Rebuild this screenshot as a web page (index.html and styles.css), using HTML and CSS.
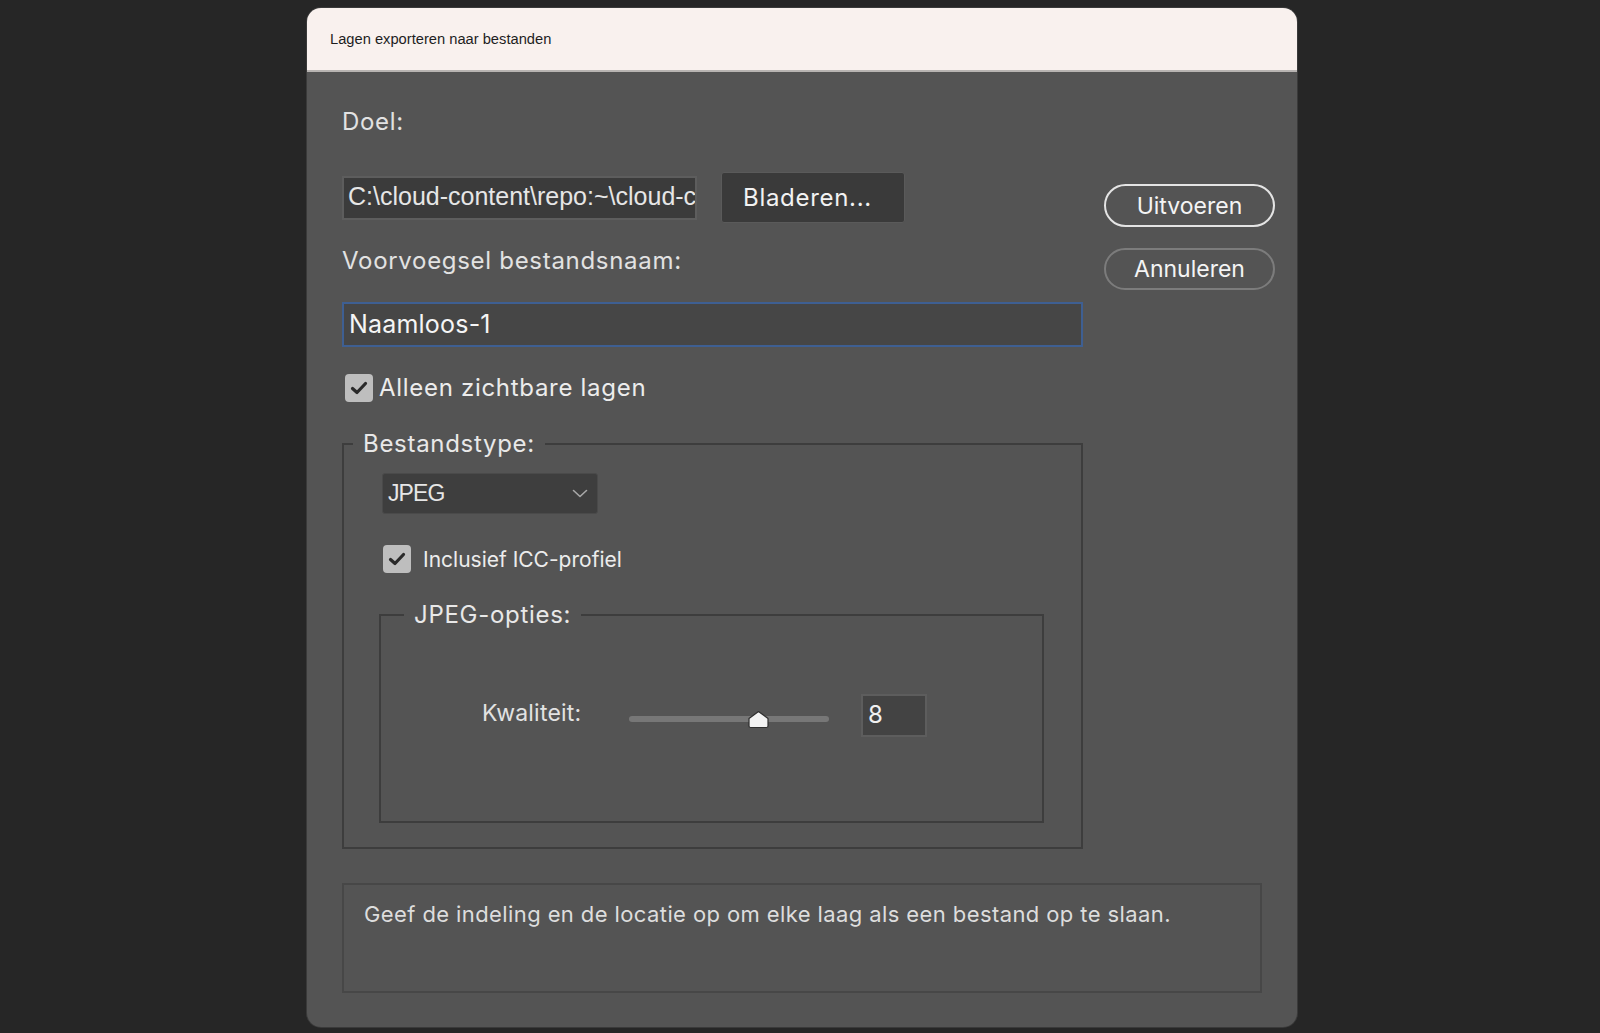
FILE: index.html
```html
<!DOCTYPE html>
<html lang="nl">
<head>
<meta charset="utf-8">
<title>Lagen exporteren naar bestanden</title>
<link rel="stylesheet" href="styles.css">
</head>
<body>
  <div class="dialog">
    <div class="titlebar"><span class="title">Lagen exporteren naar bestanden</span></div>
    <div class="content">
      <div class="top">
        <div class="main">
          <div class="label doel">Doel:</div>
          <div class="path-row">
            <div class="path-input">C:\cloud-content\repo:~\cloud-c</div>
            <button class="browse">Bladeren...</button>
          </div>
          <div class="label prefix">Voorvoegsel bestandsnaam:</div>
          <div class="name-input">Naamloos-1</div>
          <div class="check-row visible">
            <span class="checkbox"><svg width="20" height="20" viewBox="0 0 20 20"><path d="M3.5 10.5 L8 14.5 L16.5 5.5" fill="none" stroke="#2a2a2a" stroke-width="3.2" stroke-linecap="round" stroke-linejoin="round"/></svg></span>
            <span class="check-label big">Alleen zichtbare lagen</span>
          </div>
          <fieldset class="group filetype">
            <legend>Bestandstype:</legend>
            <div class="group-body">
              <div class="select">
                <span>JPEG</span>
                <svg width="16" height="9" viewBox="0 0 16 9"><path d="M1.5 1.5 L8 7.5 L14.5 1.5" fill="none" stroke="#a8a8a8" stroke-width="1.6" stroke-linecap="round" stroke-linejoin="round"/></svg>
              </div>
              <div class="check-row icc">
                <span class="checkbox"><svg width="20" height="20" viewBox="0 0 20 20"><path d="M3.5 10.5 L8 14.5 L16.5 5.5" fill="none" stroke="#2a2a2a" stroke-width="3.2" stroke-linecap="round" stroke-linejoin="round"/></svg></span>
                <span class="check-label small">Inclusief ICC-profiel</span>
              </div>
              <fieldset class="group jpeg">
                <legend>JPEG-opties:</legend>
                <div class="group-body">
                  <div class="quality-row">
                    <span class="q-label">Kwaliteit:</span>
                    <div class="slider">
                      <div class="track"></div>
                      <svg class="thumb" width="23" height="19" viewBox="0 0 23 19"><path d="M11.5 1.5 L21 8.5 V16 Q21 17.5 19.5 17.5 H3.5 Q2 17.5 2 16 V8.5 Z" fill="#f2f2f2" stroke="#2e2e2e" stroke-width="1.2" stroke-linejoin="round"/></svg>
                    </div>
                    <div class="num-input">8</div>
                  </div>
                </div>
              </fieldset>
            </div>
          </fieldset>
        </div>
        <div class="side">
          <button class="pill primary">Uitvoeren</button>
          <button class="pill secondary">Annuleren</button>
        </div>
      </div>
      <div class="desc">Geef de indeling en de locatie op om elke laag als een bestand op te slaan.</div>
    </div>
  </div>
</body>
</html>
```

FILE: styles.css
```css
* {
  box-sizing: border-box;
}

html,
body {
  margin: 0;
  height: 100%;
}

body {
  background: #262626;
  padding: 8px 0 0 307px;
  font-family: Inter, "Noto Sans", sans-serif;
  overflow: hidden;
}

.dialog {
  width: 990px;
  height: 1019px;
  background: #545454;
  border-radius: 14px;
  overflow: hidden;
  box-shadow: 0 0 0 1px #3a3a3a;
  display: flex;
  flex-direction: column;
}

.titlebar {
  height: 64px;
  flex: none;
  background: #f9f1ee;
  border-bottom: 2px solid #b8b4b2;
  display: flex;
  align-items: center;
  padding-left: 23px;
}

.title {
  font-family: "Liberation Sans", Arial, sans-serif;
  font-size: 14.7px;
  color: #1e1e1e;
}

.content {
  flex: 1;
  padding: 35px 22px 0 35px;
  display: flex;
  flex-direction: column;
}

.top {
  display: flex;
}

.main {
  width: 741px;
  display: flex;
  flex-direction: column;
  align-items: flex-start;
}

.label {
  font-size: 24px;
  line-height: 30px;
  letter-spacing: 0.7px;
  color: #e2e2e2;
}

.path-row {
  margin-top: 35px;
  height: 51px;
  display: flex;
  align-items: center;
}

.path-input {
  width: 355px;
  height: 44px;
  background: #3b3b3b;
  border: 2px solid #5d5d5d;
  overflow: hidden;
  white-space: nowrap;
  font-family: "Liberation Sans", Arial, sans-serif;
  font-size: 25px;
  line-height: 36px;
  color: #e6e6e6;
  padding-left: 4px;
}

.browse {
  margin-left: 24px;
  width: 184px;
  height: 51px;
  background: #3a3a3a;
  border: 1px solid #5a5a5a;
  border-radius: 3px;
  color: #f2f2f2;
  font-family: Inter, "Noto Sans", sans-serif;
  font-size: 24px;
  letter-spacing: 0.7px;
  text-align: left;
  padding: 0 0 0 21px;
}

.prefix {
  margin-top: 23px;
}

.name-input {
  margin-top: 26px;
  width: 741px;
  height: 45px;
  background: #464646;
  border: 2px solid #3e5f92;
  color: #f5f5f5;
  font-size: 25px;
  line-height: 41px;
  letter-spacing: 0.2px;
  padding-left: 5px;
}

.check-row {
  display: flex;
  align-items: center;
}

.checkbox {
  width: 28px;
  height: 28px;
  flex: none;
  border-radius: 4px;
  background: #bebebe;
  display: flex;
  align-items: center;
  justify-content: center;
}

.check-label {
  color: #ececec;
}

.check-label.big {
  font-size: 24px;
  letter-spacing: 0.7px;
}

.check-label.small {
  font-size: 21px;
}

.visible {
  margin-top: 26px;
  margin-left: 3px;
  gap: 6px;
}

.group {
  margin: 0;
  padding: 0;
  border: 2px solid #3d3d3d;
  min-width: 0;
}

.group legend {
  font-size: 24px;
  line-height: 30px;
  letter-spacing: 0.7px;
  color: #e8e8e8;
  padding: 0 10px;
}

.filetype {
  margin-top: 27px;
  width: 741px;
}

.filetype > legend {
  margin-left: 9px;
}

.filetype > .group-body {
  padding: 14px 37px 24px 36px;
}

.select {
  margin-left: 2px;
  width: 216px;
  height: 41px;
  background: #3e3e3e;
  border: 1px solid #4a4a4a;
  border-radius: 3px;
  display: flex;
  align-items: center;
  justify-content: space-between;
  padding: 0 9px 0 5px;
  font-family: "Liberation Sans", Arial, sans-serif;
  font-size: 23px;
  letter-spacing: -0.9px;
  color: #e6e6e6;
}

.icc {
  margin-top: 31px;
  margin-left: 3px;
  gap: 12px;
}

.jpeg {
  margin-top: 27px;
  margin-left: -1px;
  width: 665px;
}

.jpeg > legend {
  margin-left: 23px;
}

.jpeg > .group-body {
  padding: 64px 0 84px 101px;
}

.quality-row {
  height: 43px;
  display: flex;
  align-items: center;
}

.q-label {
  width: 147px;
  font-size: 23px;
  letter-spacing: 0.2px;
  padding-bottom: 6px;
  color: #e2e2e2;
}

.slider {
  position: relative;
  width: 200px;
  height: 43px;
  display: flex;
  align-items: center;
  padding-top: 6px;
}

.track {
  width: 100%;
  height: 6px;
  border-radius: 3px;
  background: #777777;
}

.thumb {
  position: absolute;
  left: 118px;
  top: 16px;
}

.num-input {
  margin-left: 32px;
  width: 66px;
  height: 43px;
  background: #434343;
  border: 2px solid #5d5d5d;
  font-size: 24px;
  line-height: 37px;
  color: #f0f0f0;
  padding-left: 5px;
}

.side {
  width: 171px;
  margin-left: 21px;
  padding-top: 77px;
  display: flex;
  flex-direction: column;
  gap: 21px;
}

.pill {
  height: 43px;
  border-radius: 22px;
  background: transparent;
  border: 2px solid #e4e4e4;
  color: #f4f4f4;
  font-family: Inter, "Noto Sans", sans-serif;
  font-size: 23px;
  padding: 0;
}

.pill.secondary {
  height: 42px;
  border-color: #7c7c7c;
}

.desc {
  margin-top: 34px;
  width: 920px;
  height: 110px;
  border: 2px solid #474747;
  padding: 15px 20px;
  font-size: 22px;
  line-height: 28px;
  letter-spacing: 0.4px;
  color: #dddddd;
}
```
